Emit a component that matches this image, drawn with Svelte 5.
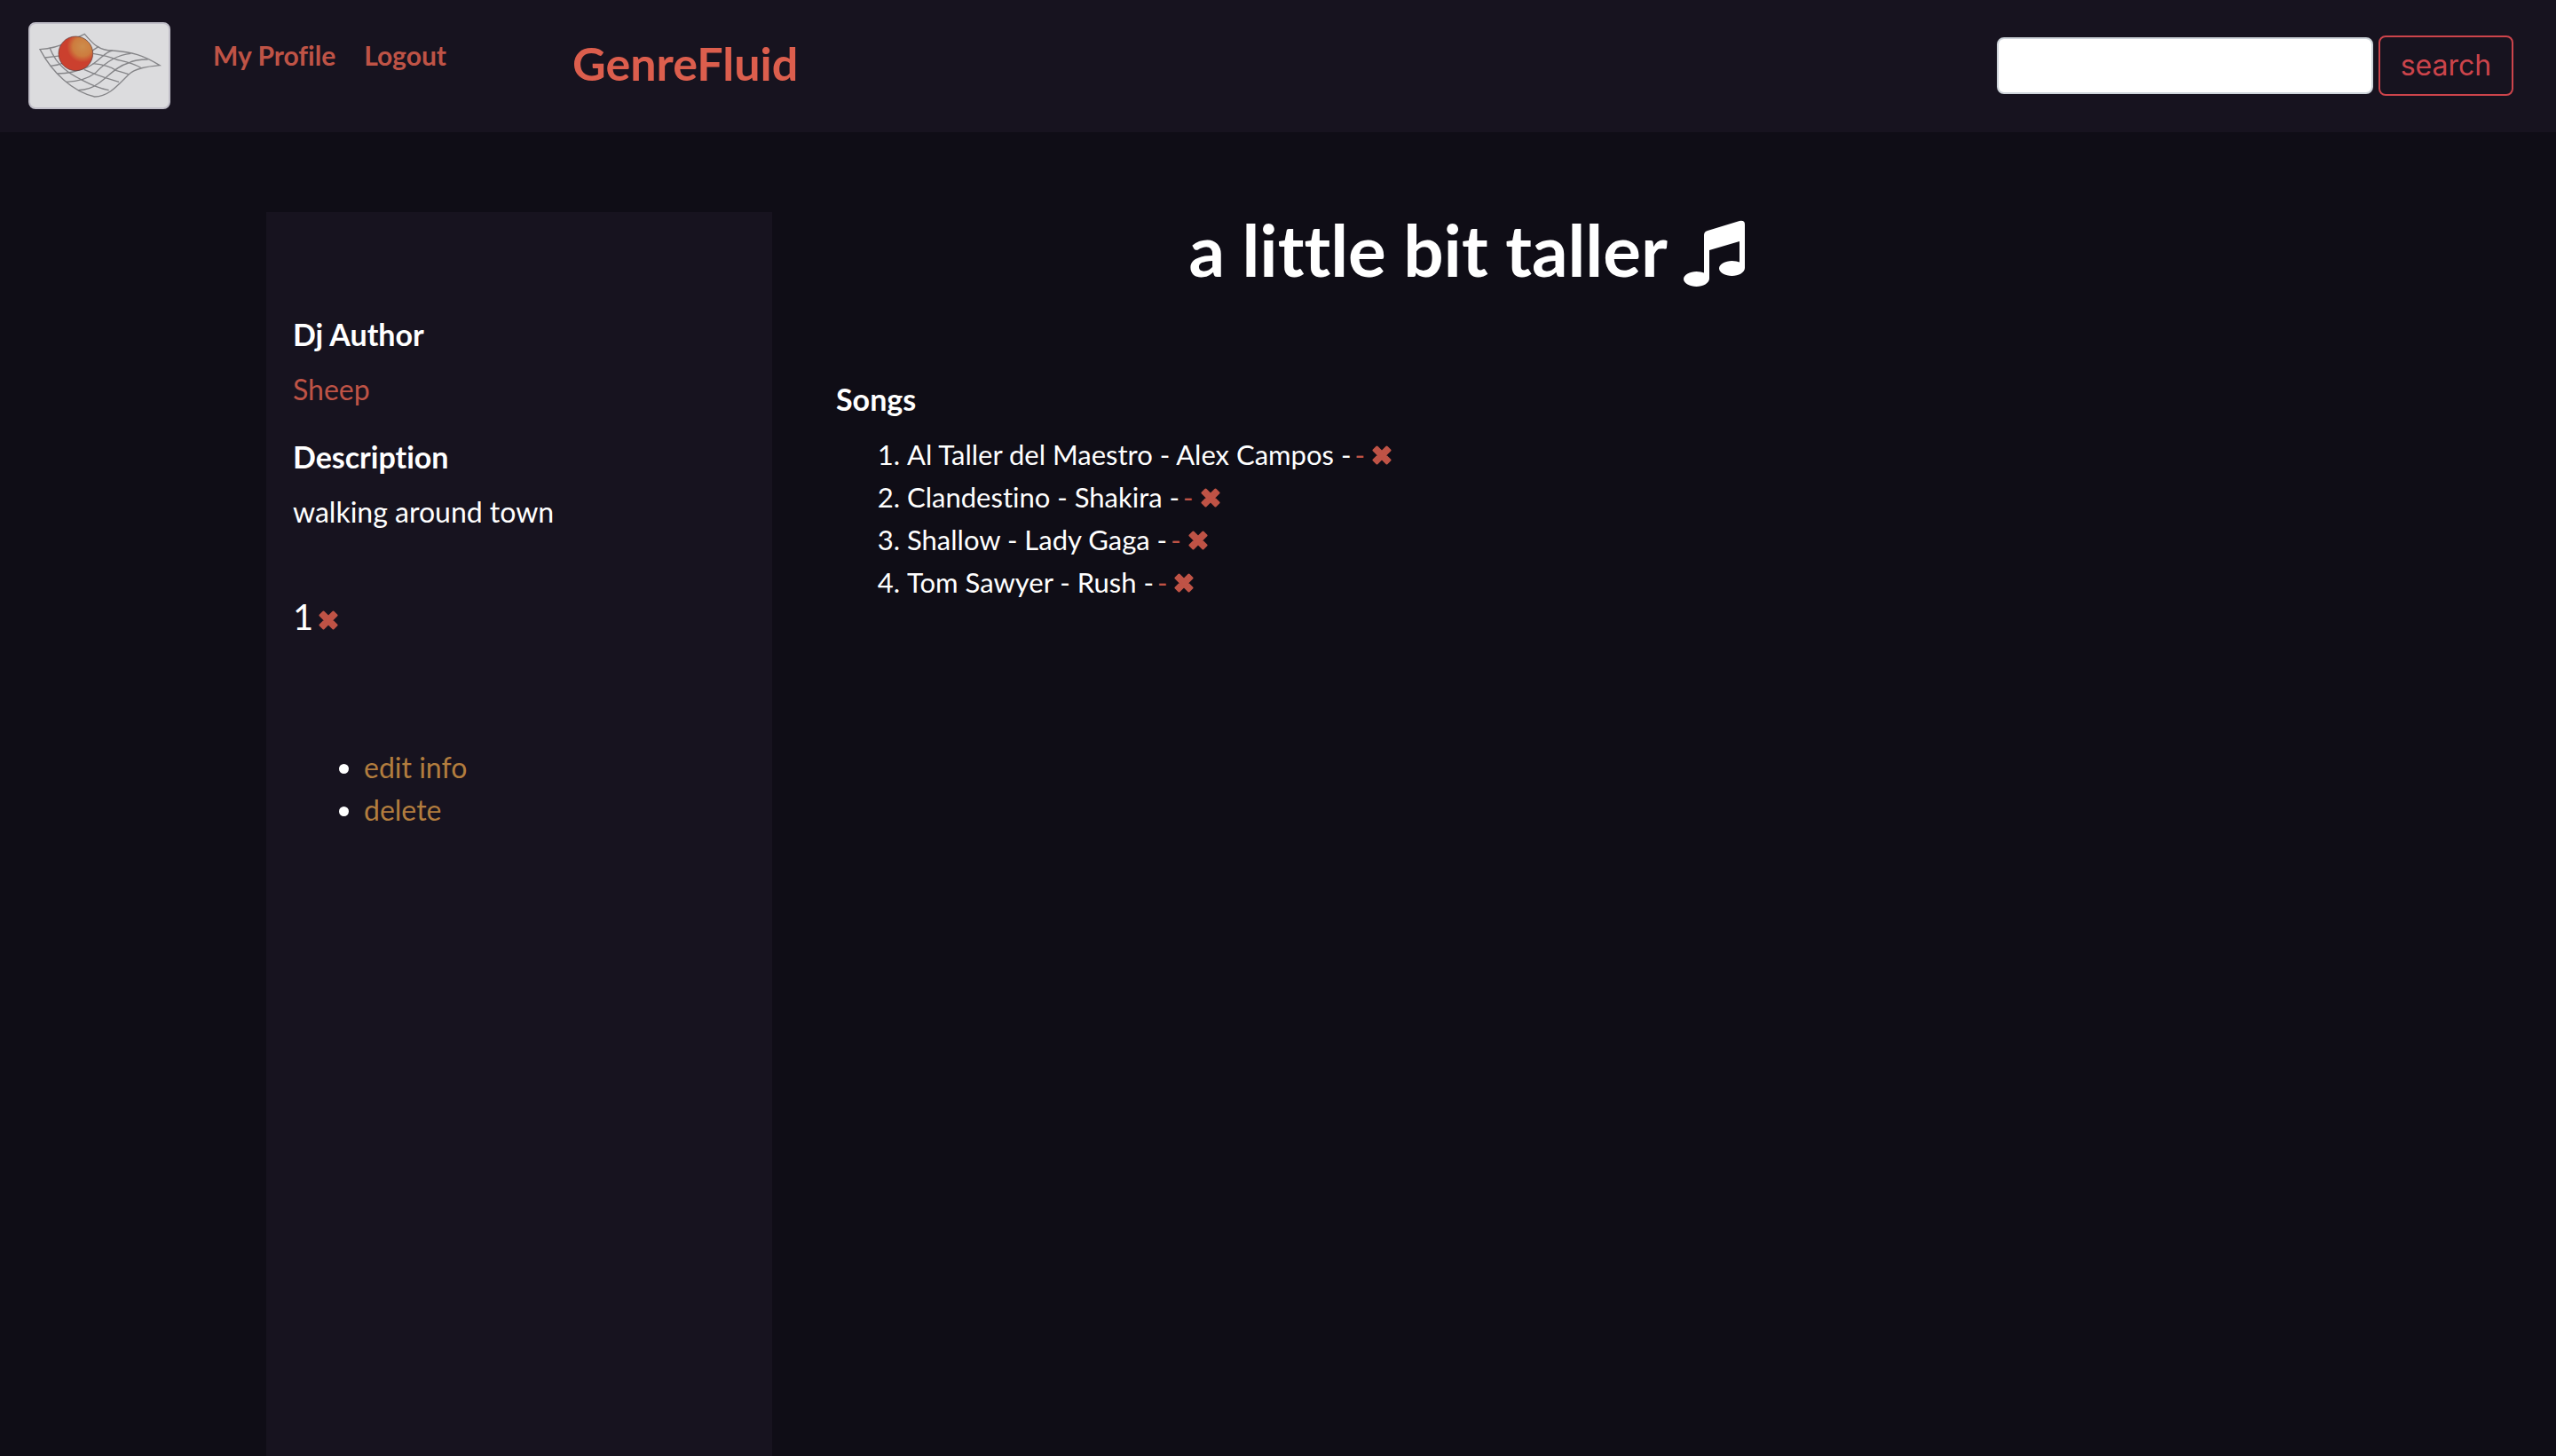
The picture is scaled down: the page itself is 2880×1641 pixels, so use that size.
<script>
  const songs = [
    { title: 'Al Taller del Maestro', artist: 'Alex Campos' },
    { title: 'Clandestino', artist: 'Shakira' },
    { title: 'Shallow', artist: 'Lady Gaga' },
    { title: 'Tom Sawyer', artist: 'Rush' },
  ];
</script>

{#snippet cross()}
  <svg class="cross" viewBox="0 0 22 22" aria-hidden="true">
    <path d="M5.500 2 11 7.500 16.500 2 20 5.500 14.500 11 20 16.500 16.500 20 11 14.500 5.500 20 2 16.500 7.500 11 2 5.500Z" />
  </svg>
{/snippet}

<div class="page">
  <header>
    <a class="logo" href="#home" aria-label="Home">
      <svg viewBox="3 3 234 141" aria-hidden="true">
        <defs>
          <radialGradient id="ball" cx="0.7" cy="0.3" r="0.46">
            <stop offset="0" stop-color="#cd8d4c" />
            <stop offset="0.6" stop-color="#cd7c3e" />
            <stop offset="1" stop-color="#cb402e" />
          </radialGradient>
        </defs>
        <g class="mesh">
          <path d="M19.500 46C36 45 52 41 66 34Q82 26 95 20C110 38 120 48 142 48C175 50 195 56 222 73C200 75 180 78 169 89C150 108 135 126 112 126C75 118 40 85 19.500 46Z" />
          <path d="M36 43C50 80 80 92 91 98C110 108 120 112 136 115" />
          <path d="M28 60Q45 58 60 56M37 74Q50 73 62 68M49 87Q75 87 100 76C120 67 128 50 142 48" />
          <path d="M64 101Q95 100 113 86C130 68 148 55 173 53" />
          <path d="M84 115Q105 114 116 105C133 95 145 76 169 69Q180 63 202 63" />
          <path d="M119 41Q104 50 100 56M109 53Q135 57 148 63C160 66 175 68 190 77" />
          <path d="M109 70Q135 72 149 82Q160 85 169 88M94 80Q112 88 130 94L153 101" />
        </g>
        <circle cx="80" cy="53" r="29" fill="url(#ball)" stroke="#55363a" />
      </svg>
    </a>
    <nav>
      <a href="#profile">My Profile</a>
      <a href="#logout">Logout</a>
    </nav>
    <a class="brand" href="#home">GenreFluid</a>
    <form onsubmit={(e) => e.preventDefault()}>
      <input type="text" name="q" aria-label="Search" />
      <button type="submit">search</button>
    </form>
  </header>

  <main>
    <aside>
      <h2>Dj Author</h2>
      <p><a href="#sheep">Sheep</a></p>
      <h2>Description</h2>
      <p>walking around town</p>
      <div class="votes">
        <span>1</span>
        <button type="button" aria-label="Remove vote">{@render cross()}</button>
      </div>
      <ul>
        <li><a href="#edit">edit info</a></li>
        <li><a href="#delete">delete</a></li>
      </ul>
    </aside>
    <section>
      <h1>
        a little bit taller
        <svg class="note" viewBox="0 0 70 76" aria-hidden="true">
          <path d="M23 17Q23 13 27 12L63 1Q69 0 69 5V54C69 59 62 63 54.500 63S40 59 40 54.500 47 46 54.500 46Q60 46 63 47.500V24L29 34V66C29 71 22 75 14.500 75S0 71 0 66.500 7 58 14.500 58Q20 58 23 59.500Z" />
        </svg>
      </h1>
      <h2>Songs</h2>
      <ol>
        {#each songs as song}
          <li>
            {song.title} - {song.artist} -<a href="#remove" aria-label="Remove {song.title}">- {@render cross()}</a>
          </li>
        {/each}
      </ol>
    </section>
  </main>
</div>

<style>
  :global(body) {
    background: #0f0d16;
  }
  .page {
    display: flex;
    flex-direction: column;
    min-height: 100vh;
    color: #fff;
    font: 32px/48px Lato, sans-serif;
    font-variant-ligatures: none;
  }
  a {
    color: #bf5346;
    text-decoration: none;
  }
  h1,
  h2,
  p,
  ul,
  ol {
    margin: 0;
  }
  header {
    display: flex;
    align-items: center;
    box-sizing: border-box;
    min-height: 149px;
    padding: 0 48px 2px 32px;
    background: #17131f;
  }
  .logo {
    box-sizing: border-box;
    width: 160px;
    height: 98px;
    border: 2px solid #c0bec8;
    border-radius: 8px;
    background: #dcdcde;
    overflow: hidden;
  }
  .logo svg {
    display: block;
    width: 100%;
    height: 100%;
  }
  .mesh {
    fill: none;
    stroke: #858588;
    stroke-width: 2;
  }
  nav {
    display: flex;
    gap: 32px;
    padding-bottom: 24px;
    margin-left: 48px;
    font-size: 30px;
    font-weight: 700;
  }
  .brand {
    margin-left: 142px;
    padding-bottom: 6px;
    color: #dc5e4d;
    font-size: 52px;
    font-weight: 700;
  }
  form {
    display: flex;
    align-items: center;
    gap: 6px;
    margin-left: auto;
  }
  input {
    box-sizing: border-box;
    width: 424px;
    height: 64px;
    padding: 0 16px;
    border: 2px solid #ced4da;
    border-radius: 8px;
    background: #fff;
    font: inherit;
  }
  form button {
    box-sizing: border-box;
    width: 152px;
    height: 68px;
    padding: 0;
    border: 2px solid #cc444b;
    border-radius: 8px;
    background: none;
    color: #cc444b;
    font: 32px/48px Inter, sans-serif;
  }
  main {
    display: flex;
    flex: 1;
    margin: 90px 300px 0;
  }
  aside {
    box-sizing: border-box;
    width: 25%;
    padding: 114px 30px 0;
    background: #17131f;
  }
  h2 {
    font-size: 34px;
    line-height: 48px;
    margin-bottom: 14px;
  }
  aside p {
    margin-bottom: 28px;
  }
  .votes {
    display: flex;
    align-items: baseline;
    gap: 6px;
    margin-top: 70px;
    font-size: 40px;
  }
  .votes button {
    padding: 0;
    border: 0;
    background: none;
    line-height: 22px;
  }
  .cross {
    width: 22px;
    height: 22px;
    fill: #bf5346;
    stroke: #bf5346;
    stroke-width: 3;
    stroke-linejoin: round;
  }
  ul {
    padding-left: 80px;
    margin-top: 122px;
  }
  ul a {
    color: #b27d3e;
  }
  section {
    box-sizing: border-box;
    width: 65%;
    margin-left: 42px;
    padding: 0 30px;
  }
  h1 {
    font-size: 80px;
    line-height: 84px;
    text-align: center;
  }
  .note {
    width: 70px;
    height: 76px;
    fill: #fff;
    vertical-align: -12px;
  }
  section h2 {
    margin-top: 102px;
  }
  ol {
    padding-left: 80px;
    font-size: 31px;
  }
  ol a {
    margin-left: 4px;
  }
</style>
